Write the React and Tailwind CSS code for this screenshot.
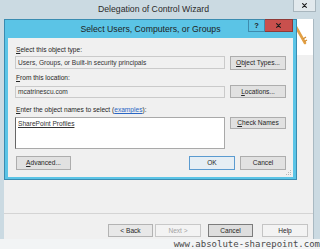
function Btn({ children, className = "" }) {
  return (
    <div
      className={
        "flex items-center justify-center border text-[6.6px] leading-[8px] text-[#262626] " +
        className
      }
    >
      {children}
    </div>
  );
}

function XGlyph({ color = "#1b1b1b", size = 6, w = 1.4 }) {
  return (
    <svg width={size} height={size} viewBox="0 0 6 6">
      <path d="M0.8 0.8 L5.2 5.2 M5.2 0.8 L0.8 5.2" stroke={color} strokeWidth={w} strokeLinecap="square" />
    </svg>
  );
}

export default function App() {
  return (
    <div className="relative w-[320px] h-[249px] overflow-hidden bg-[#cbdae2] flex flex-col font-['Liberation_Sans',Arial,sans-serif]">
      {/* outer title bar */}
      <div className="h-[19px] shrink-0 flex items-start">
        <div className="flex-1 pl-[98px] pt-[4px] text-[8.7px] leading-[11px] text-[#2b2b2b]">
          Delegation of Control Wizard
        </div>
        <div className="mr-[4px] w-[23px] h-[12px] bg-[#e2e9ed] border border-t-0 border-[#a8b6be] flex items-center justify-center">
          <XGlyph size={5} w={1.3} />
        </div>
      </div>

      {/* outer body */}
      <div className="h-[220px] shrink-0 flex">
        <div className="w-[4px] shrink-0" />
        <div className="flex-1 flex flex-col bg-[#f0f0f0]">
          <div className="h-[36px] shrink-0 bg-white flex justify-end pr-[5px]">
            <svg width="14" height="36" viewBox="0 0 14 36">
              <path d="M2 8 L11 24" stroke="#e2a045" strokeWidth="2.6" strokeLinecap="round" />
              <path d="M9 20 L12 18 M10.5 22.5 L13 21" stroke="#d08a30" strokeWidth="1.2" />
            </svg>
          </div>
          <div className="h-[159px] shrink-0 border-b border-[#d4d4d4]" />
          <div className="flex-1 flex items-start pt-[10px] pr-[5px]">
            <div className="flex-1" />
            <Btn className="w-[45px] h-[13px] bg-[#e8e8e8] border-[#b3b3b3] text-[#555]">&lt; Back</Btn>
            <Btn className="ml-[2px] w-[46px] h-[13px] bg-[#f3f3f3] border-[#c8c8c8] text-[#a3a3a3]">Next &gt;</Btn>
            <Btn className="ml-[7px] w-[45px] h-[13px] bg-[#dedede] border-[#7c7c7c] text-[#222]">Cancel</Btn>
            <Btn className="ml-[9px] w-[46px] h-[13px] bg-[#f3f3f3] border-[#c4c4c4] text-[#8a8a8a]">Help</Btn>
          </div>
        </div>
        <div className="w-[7px] shrink-0 border-l border-[#a9b9c2]" />
      </div>

      {/* bottom band with watermark */}
      <div className="h-[10px] shrink-0 bg-[#f2f4f5] flex justify-end items-center">
        <div className="text-[9px] leading-[10px] text-[#4a4a4a] font-['DejaVu_Sans_Mono',monospace] whitespace-nowrap">
          www.absolute-sharepoint.com
        </div>
      </div>

      {/* inner dialog window */}
      <div className="absolute left-[4px] top-[19px] w-[293px] h-[161px] bg-[#5bc4e6] border border-[#3a8cb1] flex flex-col">
        <div className="h-[18px] shrink-0 flex items-start">
          <div className="flex-1 pl-[48px] pt-[4px] text-center text-[8.7px] leading-[11px] text-[#1e1e1e]">
            Select Users, Computers, or Groups
          </div>
          <div className="-mt-[1px] w-[17px] h-[13px] bg-[#5bc4e6] border border-[#3f8bad] flex items-center justify-center text-[7.5px] font-bold leading-[8px] text-[#1b1b1b]">
            ?
          </div>
          <div className="-mt-[1px] w-[28px] h-[13px] bg-[#c9504d] border border-l-0 border-[#8f3a38] flex items-center justify-center mr-[3px]">
            <XGlyph size={5} w={1.3} />
          </div>
        </div>

        <div className="relative flex-1 mx-[3px] mb-[2px] bg-[#f0f0f0] flex flex-col px-[7px] text-[6.6px] text-[#262626]">
          <div className="mt-[7px] h-[10px] leading-[10px] pl-[1px]">
            <span className="underline">S</span>elect this object type:
          </div>
          <div className="mt-[1px] h-[14px] flex items-start">
            <div className="w-[210px] h-[13px] border border-[#cacaca] bg-[#f0f0f0] pl-[2px] leading-[11px] text-[#333]">
              Users, Groups, or Built-in security principals
            </div>
            <Btn className="ml-[5px] w-[56px] h-[14px] bg-[#e1e1e1] border-[#adadad]">
              <span className="underline">O</span>bject Types...
            </Btn>
          </div>

          <div className="mt-[3px] h-[10px] leading-[10px] pl-[1px]">
            <span className="underline">F</span>rom this location:
          </div>
          <div className="mt-[2px] h-[13px] flex items-start">
            <div className="mt-[1px] w-[210px] h-[12px] border border-[#cacaca] bg-[#f0f0f0] pl-[2px] leading-[10px] text-[#333]">
              mcatrinescu.com
            </div>
            <Btn className="ml-[5px] w-[56px] h-[13px] bg-[#e1e1e1] border-[#adadad]">
              <span className="underline">L</span>ocations...
            </Btn>
          </div>

          <div className="mt-[7px] h-[10px] leading-[10px] pl-[1px]">
            <span className="underline">E</span>nter the object names to select (
            <span className="underline text-[#2a66c4]">examples</span>):
          </div>
          <div className="mt-[2px] h-[32px] flex items-start">
            <div className="w-[210px] h-[32px] bg-white border border-[#a9a9a9] border-l-[#666] pl-[2px] pt-[1px] leading-[9px] text-[#333]">
              <span className="underline">SharePoint Profiles</span>
            </div>
            <Btn className="ml-[5px] w-[56px] h-[12px] bg-[#e1e1e1] border-[#adadad]">
              <span className="underline">C</span>heck Names
            </Btn>
          </div>

          <div className="mt-[7px] h-[14px] flex items-start">
            <Btn className="ml-[1px] w-[55px] h-[14px] bg-[#e1e1e1] border-[#adadad]">
              <span className="underline">A</span>dvanced...
            </Btn>
            <div className="flex-1" />
            <Btn className="w-[46px] h-[14px] bg-[#e6eef4] border-[#5b9bd0]">OK</Btn>
            <Btn className="ml-[5px] w-[46px] h-[14px] bg-[#e1e1e1] border-[#adadad]">Cancel</Btn>
          </div>

          <div className="absolute right-[2px] bottom-[2px]">
            <svg width="5" height="5" viewBox="0 0 5 5">
              <rect x="4" y="0" width="1" height="1" fill="#b8b8b8" />
              <rect x="2" y="2" width="1" height="1" fill="#b8b8b8" />
              <rect x="4" y="2" width="1" height="1" fill="#b8b8b8" />
              <rect x="0" y="4" width="1" height="1" fill="#b8b8b8" />
              <rect x="2" y="4" width="1" height="1" fill="#b8b8b8" />
              <rect x="4" y="4" width="1" height="1" fill="#b8b8b8" />
            </svg>
          </div>
        </div>
      </div>
    </div>
  );
}
